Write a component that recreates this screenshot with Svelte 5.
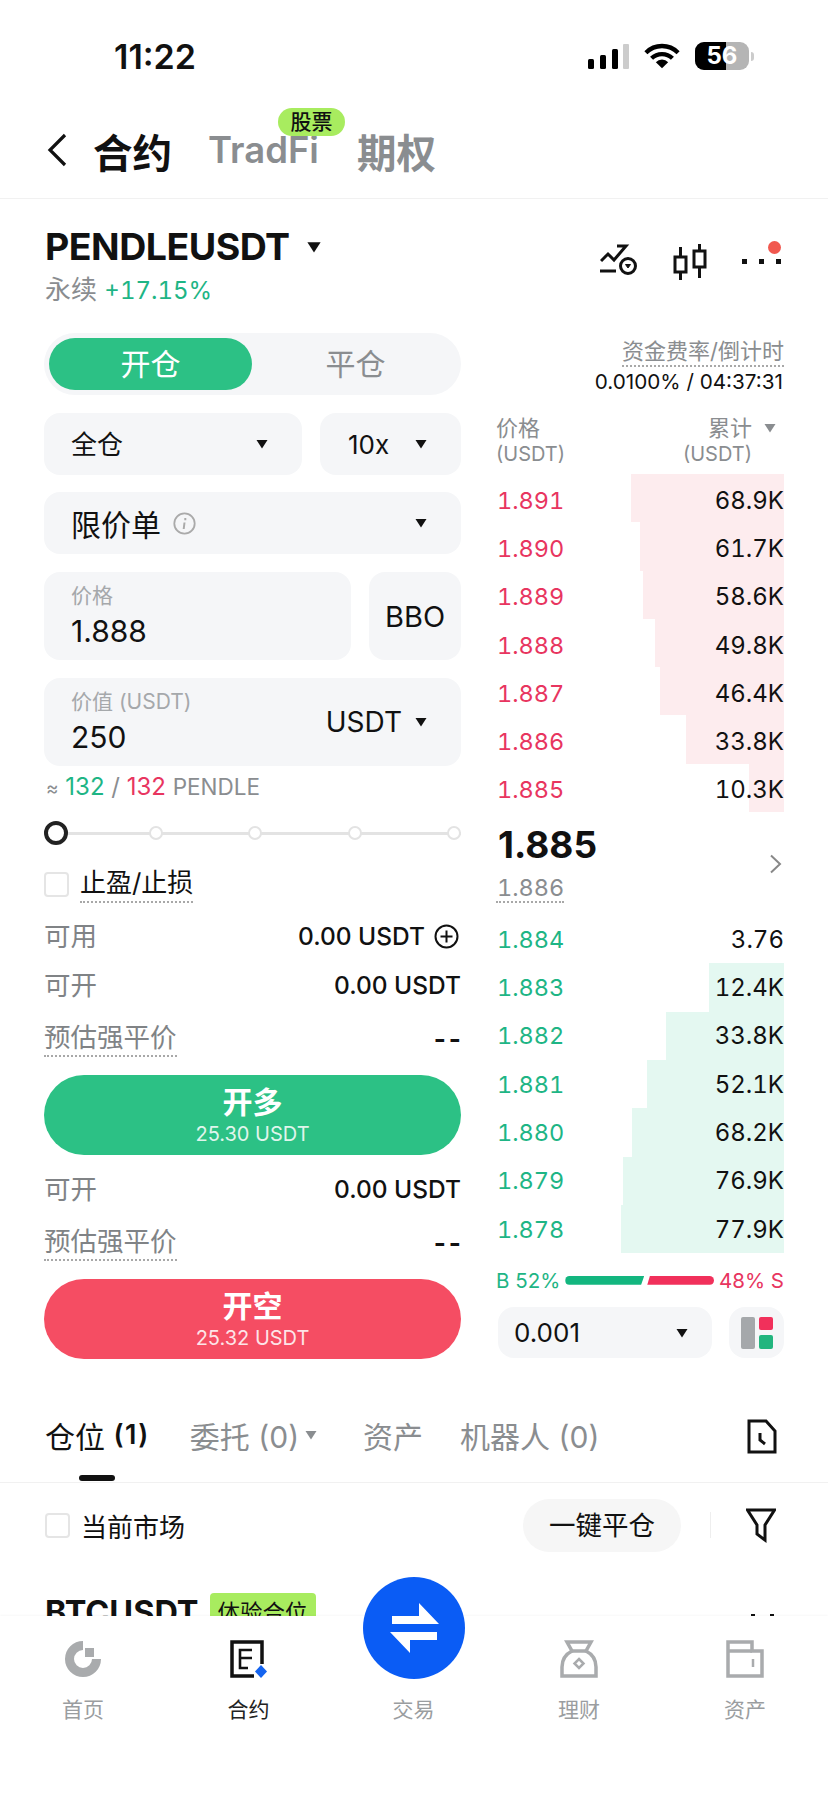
<script lang="ts">
  const asks = [
    { price: '1.891', total: '68.9K', left: 631 },
    { price: '1.890', total: '61.7K', left: 640 },
    { price: '1.889', total: '58.6K', left: 643 },
    { price: '1.888', total: '49.8K', left: 655 },
    { price: '1.887', total: '46.4K', left: 660 },
    { price: '1.886', total: '33.8K', left: 686 },
    { price: '1.885', total: '10.3K', left: 749 }
  ];
  const bids = [
    { price: '1.884', total: '3.76', left: 784 },
    { price: '1.883', total: '12.4K', left: 709 },
    { price: '1.882', total: '33.8K', left: 666 },
    { price: '1.881', total: '52.1K', left: 647 },
    { price: '1.880', total: '68.2K', left: 632 },
    { price: '1.879', total: '76.9K', left: 623 },
    { price: '1.878', total: '77.9K', left: 621 }
  ];
  const posTabs = [
    { label: '委托 (0)', caret: true },
    { label: '资产' },
    { label: '机器人 (0)' }
  ];
  const barWidth = (left: number) => 784 - left;
</script>

{#snippet caret(cls = '')}
  <svg class={'caret ' + cls} viewBox="0 0 12 10"><path d="M0.5 1h11L6 9.5z" fill="currentColor" /></svg>
{/snippet}

<div class="page">
  <div class="status">
    <span class="time">11:22</span>
    <div class="status-icons">
      <svg width="41" height="25" viewBox="0 0 41 25">
        <rect x="0" y="15" width="6" height="10" rx="1.5" fill="#000" />
        <rect x="12" y="11" width="6" height="14" rx="1.5" fill="#000" />
        <rect x="24" y="5" width="6" height="20" rx="1.5" fill="#000" />
        <rect x="35" y="0" width="6" height="25" rx="1" fill="#ccc" />
      </svg>
      <svg width="36" height="26" viewBox="0 0 38 26">
        <path d="M2 9.500a24 24 0 0 1 34 0M8 15.500a15.500 15.500 0 0 1 22 0" fill="none" stroke="#000" stroke-width="4.500" />
        <path d="M12.500 19.500a9 9 0 0 1 13 0L19 26z" fill="#000" />
      </svg>
      <div class="battery"><div class="bat-fill"></div><span>56</span></div>
      <i class="bat-cap"></i>
    </div>
  </div>

  <header class="tabs">
    <svg class="back" viewBox="0 0 20 34"><path d="M18 2L3 17l15 15" fill="none" stroke="#111" stroke-width="3.200" /></svg>
    <span class="tab active">合约</span>
    <span class="tab tradfi">TradFi</span>
    <span class="tab options">期权<em class="badge">股票</em></span>
  </header>

  <section class="market">
    <div>
      <div class="symbol">PENDLEUSDT {@render caret('sym-caret')}</div>
      <div class="sub"><span class="muted">永续</span> <span class="up pct">+17.15%</span></div>
    </div>
    <div class="market-icons">
      <svg width="38" height="31" viewBox="0 0 38 31" fill="none" stroke="#111" stroke-width="3">
        <path d="M1 17l7-7 6 6L26 2H17" />
        <path d="M0 27h16" />
        <circle cx="28" cy="22" r="7.500" />
        <path d="M25.500 20.500h5l-2.500 3.500z" fill="#111" stroke-width="1" />
      </svg>
      <svg width="34" height="36" viewBox="0 0 34 36" fill="none" stroke="#111" stroke-width="3">
        <rect x="2" y="13" width="11" height="15" />
        <rect x="21" y="7" width="11" height="16" />
        <path d="M7.500 3v10M7.500 28v8M26.500 0v7M26.500 23v11" />
      </svg>
      <div class="more">
        <i></i><i></i><i></i>
        <b class="dot"></b>
      </div>
    </div>
  </section>

  <main class="trade">
    <div class="form">
      <div class="switch">
        <span class="on">开仓</span>
        <span>平仓</span>
      </div>

      <div class="row">
        <div class="field select grow"><span class="lift">全仓</span> {@render caret()}</div>
        <div class="field select lev">10x {@render caret()}</div>
      </div>

      <div class="field select order">
        <span class="order-name">限价单
          <svg width="23" height="23" viewBox="0 0 23 23" fill="none"><circle cx="11.500" cy="11.500" r="10.200" stroke="#aaa" stroke-width="1.800" /><path d="M12.300 6v2.200M11.500 10.500l-.8 6.500" stroke="#aaa" stroke-width="2" /></svg>
        </span>
        {@render caret()}
      </div>

      <div class="row">
        <div class="field input grow">
          <label>价格</label>
          <div class="value">1.888</div>
        </div>
        <div class="field bbo">BBO</div>
      </div>

      <div class="field input amount">
        <div>
          <label>价值 (USDT)</label>
          <div class="value">250</div>
        </div>
        <div class="unit">USDT {@render caret()}</div>
      </div>

      <div class="approx"><span class="muted approx-sign">≈</span> <span class="up">132</span> <span class="muted">/</span> <span class="down">132</span> <span class="muted pendle">PENDLE</span></div>

      <div class="slider">
        <i class="thumb"></i><i class="node"></i><i class="node"></i><i class="node"></i><i class="node"></i>
      </div>

      <div class="tpsl"><span class="check"></span><span class="dotted">止盈/止损</span></div>

      <div class="info first"><span class="k">可用</span><span class="v">0.00 USDT
        <svg width="25" height="25" viewBox="0 0 25 25" fill="none" stroke="#111" stroke-width="2"><circle cx="12.500" cy="12.500" r="11" /><path d="M6.500 12.500h12M12.500 6.500v12" /></svg>
      </span></div>
      <div class="info second"><span class="k">可开</span><span class="v">0.00 USDT</span></div>
      <div class="info third"><span class="k dotted">预估强平价</span><span class="v dash">--</span></div>
      <button class="cta long"><b>开多</b><small>25.30 USDT</small></button>

      <div class="info after"><span class="k">可开</span><span class="v">0.00 USDT</span></div>
      <div class="info fifth"><span class="k dotted">预估强平价</span><span class="v dash">--</span></div>
      <button class="cta short"><b>开空</b><small>25.32 USDT</small></button>
    </div>

    <div class="book">
      <div class="funding">
        <span class="dotted">资金费率/倒计时</span>
        <span class="rate">0.0100% / 04:37:31</span>
      </div>
      <div class="book-head">
        <div>价格<small>(USDT)</small></div>
        <div class="right"><span class="total-label">累计 {@render caret('head-caret')}</span><small>(USDT)</small></div>
      </div>
      <div class="levels asks">
        {#each asks as a}
          <div class="level">
            <i class="bar ask" style="width: {barWidth(a.left)}px"></i>
            <span class="price down">{a.price}</span><span class="amt">{a.total}</span>
          </div>
        {/each}
      </div>
      <div class="last">
        <div>
          <div class="last-price">1.885</div>
          <span class="mark dotted">1.886</span>
        </div>
        <svg class="last-arrow" width="13" height="20" viewBox="0 0 13 20"><path d="M2 1.500l9 8.500-9 8.500" fill="none" stroke="#888" stroke-width="2" /></svg>
      </div>
      <div class="levels">
        {#each bids as b}
          <div class="level">
            <i class="bar bid" style="width: {barWidth(b.left)}px"></i>
            <span class="price up">{b.price}</span><span class="amt">{b.total}</span>
          </div>
        {/each}
      </div>
      <div class="ratio">
        <span class="up">B 52%</span>
        <i class="r-buy"></i><i class="r-sell"></i>
        <span class="down">48% S</span>
      </div>
      <div class="book-foot">
        <div class="field select tick">0.001 {@render caret()}</div>
        <div class="field layout">
          <svg width="32" height="32" viewBox="0 0 32 32">
            <rect x="0" y="0" width="14" height="32" rx="2" fill="#a5a8ab" />
            <rect x="18" y="0" width="14" height="13" rx="2" fill="#f1305b" />
            <rect x="18" y="18" width="14" height="14" rx="2" fill="#22b57e" />
          </svg>
        </div>
      </div>
    </div>
  </main>

  <section class="pos-tabs">
    <span class="pos-tab active">仓位 <b>(1)</b></span>
    {#each posTabs as t}
      <span class="pos-tab">{t.label}{#if t.caret}{@render caret('pos-caret')}{/if}</span>
    {/each}
    <svg class="history" width="30" height="35" viewBox="0 0 30 35" fill="none" stroke="#111" stroke-width="3">
      <path d="M2 2h17l9 10v21H2z" />
      <path d="M13 14v7l5 4" />
    </svg>
    <i class="pos-line"></i>
  </section>

  <section class="filters">
    <span class="check"></span>
    <span class="cur">当前市场</span>
    <span class="close-all">一键平仓</span>
    <i class="sep"></i>
    <svg width="30" height="35" viewBox="0 0 30 35" fill="none" stroke="#111" stroke-width="3"><path d="M1.500 2h27L19 17v15l-8-6V17z" /></svg>
  </section>

  <section class="position">
    <span class="pos-symbol">BTCUSDT</span>
    <span class="trial">体验合位</span>
    <span class="pos-more"><i></i><i></i></span>
  </section>

  <nav class="tabbar">
    <div class="swap">
      <svg width="54" height="54" viewBox="-27 -27 54 54" fill="#fff">
        <path d="M5-25L25-4H-22V-12H5zM-24 4H23V12H-4V25z" />
      </svg>
    </div>
    <div class="nav-item">
      <svg width="38" height="38" viewBox="0 0 38 38" fill="#a9abad">
        <path d="M19 1a18 18 0 1 0 18 18h-9a9 9 0 1 1-9-9z" />
        <rect x="21" y="8" width="9" height="9" />
      </svg>
      <span>首页</span>
    </div>
    <div class="nav-item on">
      <svg width="38" height="38" viewBox="0 0 38 38" fill="none">
        <path d="M32 24V2H2v34h22" stroke="#111" stroke-width="3.500" />
        <path d="M22 10H10v18h8M10 18h12" stroke="#111" stroke-width="2.600" />
        <path d="M31 25l6 6.500-6 6.500-6-6.500z" fill="#1464f0" />
      </svg>
      <span>合约</span>
    </div>
    <div class="nav-item"><i class="gap"></i><span>交易</span></div>
    <div class="nav-item">
      <svg width="38" height="38" viewBox="0 0 38 38" fill="none" stroke="#a9abad" stroke-width="3.500">
        <path d="M7 2h24l-5 9c6 3 10 9 10 16v9H2v-9c0-7 4-13 10-16z" />
        <path d="M12 11h14" />
        <path d="M19 19l4.500 4.500-4.500 4.500-4.500-4.500z" stroke-width="2.500" />
      </svg>
      <span>理财</span>
    </div>
    <div class="nav-item">
      <svg width="38" height="38" viewBox="0 0 38 38" fill="none" stroke="#a9abad" stroke-width="3.500">
        <path d="M2 36V2h24v9h10v25z" />
        <path d="M2 11h24" />
        <path d="M27 19v8" stroke-width="2.500" />
      </svg>
      <span>资产</span>
    </div>
  </nav>
</div>

<style>
  :global(body) {
    margin: 0;
    background: #fff;
  }

  .page {
    position: relative;
    width: 828px;
    height: 1793px;
    overflow: hidden;
    background: #fff;
    color: #111;
    font-family: Inter, "Noto Sans CJK SC", sans-serif;
  }

  i, em { font-style: normal; display: block; }
  .muted { color: #8a8d90; }
  .up { color: #1eb585; }
  .down { color: #e8355f; }

  .dotted {
    border-bottom: 2px dotted #a8a8a8;
  }

  .caret {
    width: 12px;
    height: 10px;
    color: #111;
    flex: none;
  }

  .status {
    height: 100px;
    display: flex;
    justify-content: space-between;
    align-items: center;
    padding: 12px 74px 0 114px;
    box-sizing: border-box;
  }

  .time {
    font-size: 34px;
    font-weight: 600;
  }

  .status-icons {
    display: flex;
    align-items: center;
    gap: 15px;
  }

  .battery {
    position: relative;
    width: 54px;
    height: 28px;
    border-radius: 9px;
    background: #b5b5b5;
    overflow: hidden;
    text-align: center;
    color: #fff;
    font-size: 24px;
    line-height: 28px;
    font-weight: 700;
  }

  .bat-fill {
    position: absolute;
    inset: 0 23px 0 0;
    background: #000;
  }

  .battery span {
    position: relative;
  }

  .bat-cap {
    width: 3px;
    height: 9px;
    background: #ccc;
    border-radius: 0 3px 3px 0;
    margin-left: -13px;
  }

  .tabs {
    height: 99px;
    box-sizing: border-box;
    display: flex;
    align-items: center;
    padding: 2px 0 0 47px;
    border-bottom: 1px solid #f1f1f1;
  }

  .back {
    width: 20px;
    height: 34px;
    margin-right: 26px;
  }

  .tab {
    font-size: 39.500px;
    font-weight: 700;
    color: #8a8d90;
    margin-right: 36px;
    position: relative;
  }

  .tab.active { color: #111; }

  .tradfi {
    font-size: 36.500px;
    font-weight: 600;
    margin-right: 38px;
  }

  .badge {
    position: absolute;
    left: -79px;
    top: -14px;
    width: 67px;
    height: 28px;
    border-radius: 14px;
    background: #a8ec5f;
    color: #111;
    font-size: 21px;
    line-height: 28px;
    font-weight: 500;
    text-align: center;
  }

  .market {
    display: flex;
    justify-content: space-between;
    padding: 25px 46px 0 45px;
    height: 134px;
    box-sizing: border-box;
  }

  .symbol {
    font-size: 37.500px;
    font-weight: 700;
    line-height: 46px;
    display: flex;
    align-items: center;
    letter-spacing: -0.5px;
  }

  .sym-caret {
    width: 16px;
    height: 12px;
    margin: 0 0 0 16px;
  }

  .sub {
    font-size: 26px;
    line-height: 36px;
    margin-top: 2px;
  }

  .pct {
    font-size: 24px;
    font-variant-numeric: tabular-nums;
  }

  .market-icons {
    display: flex;
    align-items: flex-start;
    gap: 35px;
    padding-top: 20px;
  }

  .more {
    position: relative;
    display: flex;
    gap: 12px;
    width: 40px;
    padding-top: 15px;
  }

  .more i {
    width: 5px;
    height: 5px;
    background: #111;
  }

  .dot {
    position: absolute;
    right: 1px;
    top: -3px;
    width: 13px;
    height: 13px;
    border-radius: 50%;
    background: #f1584f;
  }

  .trade {
    display: grid;
    grid-template-columns: 417px 287px;
    column-gap: 36px;
    padding-left: 44px;
  }

  .form {
    display: flex;
    flex-direction: column;
  }

  .switch {
    height: 62px;
    border-radius: 31px;
    background: #f5f6f8;
    display: grid;
    grid-template-columns: 203px 1fr;
    align-items: center;
    padding: 5px 2px 5px 5px;
    box-sizing: border-box;
    color: #8a8d90;
    font-size: 30px;
    text-align: center;
  }

  .switch span {
    line-height: 52px;
    border-radius: 26px;
  }

  .switch .on {
    background: #2cc185;
    color: #fff;
  }

  .row {
    display: flex;
    gap: 18px;
  }

  .grow { flex: 1; }

  .field {
    background: #f5f6f8;
    border-radius: 16px;
    box-sizing: border-box;
  }

  .select {
    height: 62px;
    display: flex;
    align-items: center;
    justify-content: space-between;
    padding: 0 34px 0 27px;
    font-size: 26px;
  }

  .lift {
    padding-bottom: 3px;
  }

  .form > .row:nth-child(2) {
    margin-top: 18px;
  }

  .lev {
    width: 141px;
    padding-left: 28px;
  }

  .order {
    margin-top: 17px;
    font-size: 30px;
  }

  .order-name {
    display: flex;
    align-items: center;
    gap: 12px;
  }

  .form > .row:nth-child(4) {
    margin-top: 18px;
  }

  .input {
    height: 88px;
    padding: 9px 27px 0;
  }

  .input label {
    display: block;
    font-size: 21px;
    line-height: 30px;
    color: #a5a8ab;
  }

  .value {
    font-size: 30px;
    line-height: 40px;
  }

  .bbo {
    width: 92px;
    display: flex;
    align-items: center;
    justify-content: center;
    font-size: 29px;
  }

  .amount {
    margin-top: 18px;
    display: flex;
    justify-content: space-between;
    align-items: center;
    padding-right: 34px;
    padding-top: 0;
  }

  .unit {
    display: flex;
    align-items: center;
    gap: 13px;
    font-size: 28px;
  }

  .approx {
    font-size: 24px;
    line-height: 32px;
    margin-top: 5px;
    padding-left: 2px;
  }

  .approx-sign {
    font-size: 19px;
  }

  .pendle {
    font-size: 22.500px;
  }

  .slider {
    display: flex;
    justify-content: space-between;
    align-items: center;
    height: 24px;
    margin-top: 16px;
    padding-left: 5px;
    background: linear-gradient(#e3e3e3, #e3e3e3) center / 100% 3px no-repeat;
  }

  .thumb {
    width: 24px;
    height: 24px;
    margin: 0 -5px;
    box-sizing: border-box;
    border: 4px solid #222;
    border-radius: 50%;
    background: #fff;
  }

  .node {
    width: 14px;
    height: 14px;
    box-sizing: border-box;
    border: 2px solid #e3e3e3;
    border-radius: 50%;
    background: #fff;
  }

  .tpsl {
    display: flex;
    align-items: center;
    gap: 11px;
    margin-top: 20px;
    font-size: 26px;
    line-height: 36px;
  }

  .check {
    width: 25px;
    height: 25px;
    box-sizing: border-box;
    border: 2px solid #e5e5e5;
    border-radius: 4px;
    flex: none;
  }

  .info {
    display: flex;
    justify-content: space-between;
    align-items: center;
    height: 48px;
    font-size: 24.500px;
  }

  .info.first { margin-top: 9px; }
  .info.second { margin-top: 1px; }
  .info.third { margin-top: 5px; }
  .info.after { margin-top: 10px; }
  .info.fifth { margin-top: 5px; }

  .k {
    color: #808386;
    font-size: 26.500px;
    line-height: 36px;
  }

  .v {
    display: flex;
    align-items: center;
    gap: 9px;
    font-weight: 500;
  }

  .first .v {
    margin-right: 2px;
  }

  .dash {
    font-size: 26px;
    letter-spacing: 3px;
    margin-right: -3px;
    font-weight: 700;
  }

  .cta {
    border: 0;
    width: 100%;
    height: 80px;
    border-radius: 40px;
    margin-top: 13px;
    padding: 0;
    color: #fff;
    font-family: inherit;
    display: flex;
    flex-direction: column;
    align-items: center;
    justify-content: center;
  }

  .cta b {
    font-size: 30px;
    line-height: 38px;
    font-weight: 700;
  }

  .cta small {
    font-size: 20px;
    line-height: 26px;
    opacity: 0.85;
  }

  .long { background: #2cc185; }
  .short { background: #f54d63; }

  .book {
    display: flex;
    flex-direction: column;
    margin-left: -1px;
  }

  .funding {
    display: flex;
    flex-direction: column;
    align-items: flex-end;
    margin-top: 5px;
  }

  .funding .dotted {
    font-size: 22px;
    line-height: 27px;
    color: #8a8d90;
  }

  .rate {
    font-size: 20.700px;
    line-height: 30px;
    padding-right: 1px;
  }

  .book-head {
    display: flex;
    justify-content: space-between;
    margin-top: 16px;
    color: #8a8d90;
    font-size: 22px;
    line-height: 30px;
  }

  .book-head small {
    display: block;
    font-size: 20px;
    line-height: 22px;
  }

  .right {
    padding-right: 32px;
    text-align: right;
    position: relative;
  }

  .total-label {
    display: inline-block;
  }

  .head-caret {
    position: absolute;
    right: 8px;
    top: 10px;
    color: #8a8d90;
  }

  .levels {
    display: flex;
    flex-direction: column;
    font-variant-numeric: tabular-nums;
  }

  .book-head + .levels {
    margin-top: 9px;
  }

  .level {
    position: relative;
    height: 48.300px;
    display: flex;
    justify-content: space-between;
    align-items: center;
    font-size: 24px;
    box-sizing: border-box;
  }

  .asks .level {
    padding-top: 4px;
  }

  .level > span {
    position: relative;
  }

  .level > .price {
    font-size: 23.500px;
    padding-left: 1px;
  }

  .bar {
    position: absolute;
    right: 0;
    top: 0;
    bottom: 0;
  }

  .ask { background: #fdecee; }
  .bid { background: #e4f8f1; }

  .last {
    display: flex;
    justify-content: space-between;
    align-items: flex-start;
    height: 103px;
    padding: 9px 2px 0 0;
    box-sizing: border-box;
  }

  .last-arrow {
    margin-top: 33px;
  }

  .last-price {
    font-size: 37px;
    line-height: 48px;
    font-weight: 700;
    padding-left: 2px;
  }

  .mark {
    font-size: 23.500px;
    line-height: 27px;
    margin-top: 5px;
    color: #8a8d90;
    padding-left: 1px;
    display: inline-block;
    font-variant-numeric: tabular-nums;
  }

  .ratio {
    display: flex;
    align-items: center;
    font-size: 20.500px;
    height: 28px;
    margin-top: 13px;
    white-space: nowrap;
  }

  .r-buy {
    width: 79px;
    height: 9px;
    margin-left: 5px;
    background: #13b67f;
    border-radius: 5px 0 0 5px;
    clip-path: polygon(0 0, 100% 0, 96% 100%, 0 100%);
    flex: none;
  }

  .r-sell {
    width: 67px;
    height: 9px;
    margin-left: 3px;
    background: #f1305b;
    border-radius: 0 5px 5px 0;
    clip-path: polygon(4% 0, 100% 0, 100% 100%, 0 100%);
    flex: none;
  }

  .ratio .down {
    margin-left: auto;
  }

  .book-foot {
    display: flex;
    gap: 17px;
    margin-top: 13px;
    margin-left: 2px;
  }

  .tick {
    width: 214px;
    height: 51px;
    padding: 0 24px 0 16px;
    font-size: 26px;
  }

  .layout {
    flex: 1;
    display: flex;
    align-items: center;
    justify-content: center;
  }

  .pos-tabs {
    position: relative;
    display: flex;
    align-items: center;
    height: 124px;
    padding: 28px 0 0 45px;
    box-sizing: border-box;
    font-size: 30px;
    color: #8a8d90;
    border-bottom: 1px solid #f1f1f1;
  }

  .pos-tab {
    margin-right: 40px;
    display: flex;
    align-items: center;
    white-space: pre;
  }

  .pos-tab:nth-child(2) { margin-right: 46px; }
  .pos-tab:nth-child(3) { margin-right: 37px; }

  .pos-tab.active {
    color: #111;
  }

  .pos-tab b {
    font-weight: 600;
    font-size: 27px;
    letter-spacing: 1.500px;
  }

  .pos-caret {
    color: #8a8d90;
    margin-left: 6px;
  }

  .history {
    position: absolute;
    left: 747px;
    top: 60px;
  }

  .pos-line {
    position: absolute;
    left: 79px;
    bottom: 1px;
    width: 36px;
    height: 6px;
    border-radius: 3px;
    background: #111;
  }

  .filters {
    display: flex;
    align-items: center;
    height: 84px;
    padding: 0 52px 0 45px;
    font-size: 26px;
  }

  .cur {
    margin-left: 11px;
    flex: 1;
  }

  .close-all {
    width: 158px;
    height: 53px;
    line-height: 53px;
    text-align: center;
    border-radius: 27px;
    background: #f6f6f6;
    font-size: 26.500px;
  }

  .sep {
    width: 1px;
    height: 26px;
    background: #eee;
    margin: 0 35px 0 29px;
  }

  .position {
    position: relative;
    display: flex;
    align-items: center;
    gap: 11px;
    padding: 26px 0 0 45px;
  }

  .pos-symbol {
    font-size: 32.500px;
    line-height: 36px;
    font-weight: 700;
  }

  .trial {
    background: #a8ec5f;
    border-radius: 4px;
    font-size: 22.500px;
    line-height: 40px;
    padding: 0 8px;
  }

  .pos-more {
    position: absolute;
    left: 751px;
    top: 47px;
    display: flex;
    gap: 15px;
  }

  .pos-more i {
    width: 4px;
    height: 6px;
    background: #111;
  }

  .tabbar {
    position: absolute;
    left: 0;
    right: 0;
    top: 1616px;
    bottom: 0;
    background: #fff;
    box-shadow: 0 -1px 2px rgba(0, 0, 0, 0.03);
    display: grid;
    grid-template-columns: 166px 165px 165px 166px 166px;
    justify-items: center;
    padding-top: 24px;
    align-content: start;
  }

  .swap {
    position: absolute;
    left: 363px;
    top: -39px;
    width: 102px;
    height: 102px;
    border-radius: 50%;
    background: #0a5cf5;
    display: flex;
    align-items: center;
    justify-content: center;
  }

  .nav-item {
    display: flex;
    flex-direction: column;
    align-items: center;
    gap: 18px;
    font-size: 21px;
    line-height: 28px;
    color: #9a9da0;
  }

  .nav-item svg, .gap {
    width: 38px;
    height: 38px;
  }

  .nav-item.on {
    color: #222;
  }
</style>
